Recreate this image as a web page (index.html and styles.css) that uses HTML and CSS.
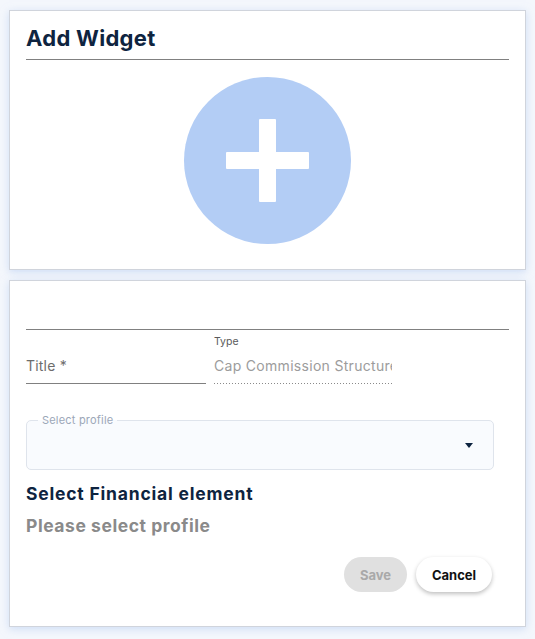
FILE: index.html
```html
<!DOCTYPE html>
<html>
<head>
<meta charset="utf-8">
<link rel="stylesheet" href="styles.css">
</head>
<body>
<div class="page">
  <section class="card card-top">
    <h1 class="card-title">Add Widget</h1>
    <div class="divider"></div>
    <div class="add-area">
      <div class="add-circle">
        <span class="plus-h"></span>
        <span class="plus-v"></span>
      </div>
    </div>
  </section>
  <section class="card card-form">
    <div class="field-blank"></div>
    <div class="row-fields">
      <div class="field field-title">
        <span class="field-placeholder">Title *</span>
      </div>
      <div class="field field-type">
        <span class="field-label">Type</span>
        <span class="field-value">Cap Commission Structure</span>
      </div>
    </div>
    <div class="select-box">
      <span class="select-legend">Select profile</span>
      <span class="select-arrow"></span>
    </div>
    <h2 class="section-title">Select Financial element</h2>
    <p class="section-empty">Please select profile</p>
    <div class="actions">
      <button class="btn btn-save">Save</button>
      <button class="btn btn-cancel">Cancel</button>
    </div>
  </section>
</div>
</body>
</html>
```

FILE: styles.css
```css
* { box-sizing: border-box; }
html, body {
  margin: 0;
  padding: 0;
  background: #f4f7fc;
  font-family: "Inter", "Liberation Sans", sans-serif;
}
.page {
  padding: 10px 0 0 9px;
  width: 535px;
  height: 639px;
}
.card {
  width: 517px;
  background: #ffffff;
  border: 1px solid #d0d4dc;
  padding: 0 16px;
  box-shadow: 0 2px 8px rgba(175, 200, 240, 0.55);
}
.card-top {
  height: 260px;
}
.card-title {
  margin: 0;
  padding-top: 14px;
  font-size: 22px;
  line-height: 26px;
  font-weight: 700;
  color: #0e2440;
  letter-spacing: 0.3px;
}
.divider {
  margin-top: 8px;
  height: 1px;
  background: #808080;
}
.add-area {
  display: flex;
  justify-content: center;
  padding-top: 17px;
}
.add-circle {
  position: relative;
  width: 167px;
  height: 167px;
  border-radius: 50%;
  background: #b3cdf5;
}
.plus-h {
  position: absolute;
  left: 42px;
  top: 75px;
  width: 83px;
  height: 17px;
  background: #fff;
  border-radius: 1px;
}
.plus-v {
  position: absolute;
  left: 75px;
  top: 42px;
  width: 17px;
  height: 83px;
  background: #fff;
  border-radius: 1px;
}
.card-form {
  margin-top: 10px;
  height: 347px;
}
.field-blank {
  height: 49px;
  border-bottom: 1px solid #808080;
}
.row-fields {
  display: flex;
  gap: 8px;
  height: 54px;
}
.field {
  display: flex;
  flex-direction: column;
  justify-content: flex-end;
  height: 54px;
}
.field-title {
  width: 180px;
  border-bottom: 1px solid #808080;
  padding-bottom: 8px;
}
.field-placeholder {
  font-size: 14px;
  color: #6d6d6d;
  line-height: 18px;
  letter-spacing: 0.2px;
}
.field-type {
  width: 178px;
  overflow: hidden;
  white-space: nowrap;
  padding-bottom: 9px;
  background-image: repeating-linear-gradient(to right, #8a8a8a 0 1px, transparent 1px 3px);
  background-size: 100% 1px;
  background-position: left bottom;
  background-repeat: no-repeat;
}
.field-label {
  font-size: 10.5px;
  color: #5a5a5a;
  line-height: 12px;
  margin-bottom: 9px;
}
.field-value {
  font-size: 14px;
  color: #9c9c9c;
  line-height: 18px;
  letter-spacing: 0.3px;
}
.select-box {
  position: relative;
  margin-top: 36px;
  width: 468px;
  height: 50px;
  border: 1px solid #dfe4ec;
  border-radius: 5px;
  background: #f9fbfe;
}
.select-legend {
  position: absolute;
  left: 11px;
  top: -8px;
  padding: 0 4px;
  font-size: 11px;
  line-height: 14px;
  color: #9ca7b8;
  letter-spacing: 0.2px;
  background: linear-gradient(#ffffff 50%, #f9fbfe 50%);
}
.select-arrow {
  position: absolute;
  right: 20px;
  top: 22px;
  width: 0;
  height: 0;
  border-left: 4px solid transparent;
  border-right: 4px solid transparent;
  border-top: 5px solid #0e2440;
}
.section-title {
  margin: 13px 0 0;
  font-size: 17.5px;
  line-height: 22px;
  font-weight: 700;
  color: #0e2440;
  letter-spacing: 0.8px;
}
.section-empty {
  margin: 10px 0 0;
  font-size: 17.5px;
  line-height: 22px;
  font-weight: 700;
  color: #8a8a8a;
  letter-spacing: 0.55px;
}
.actions {
  display: flex;
  justify-content: flex-end;
  gap: 9px;
  margin-top: 20px;
  padding-right: 17px;
}
.btn {
  height: 35px;
  border: none;
  border-radius: 18px;
  font-family: inherit;
  font-size: 13px;
  font-weight: 700;
}
.btn-save {
  width: 63px;
  background: #e0e0e0;
  color: #a9a9a9;
}
.btn-cancel {
  width: 76px;
  background: #fff;
  color: #111;
  box-shadow: 0 2px 4px rgba(0,0,0,0.25);
}
```
